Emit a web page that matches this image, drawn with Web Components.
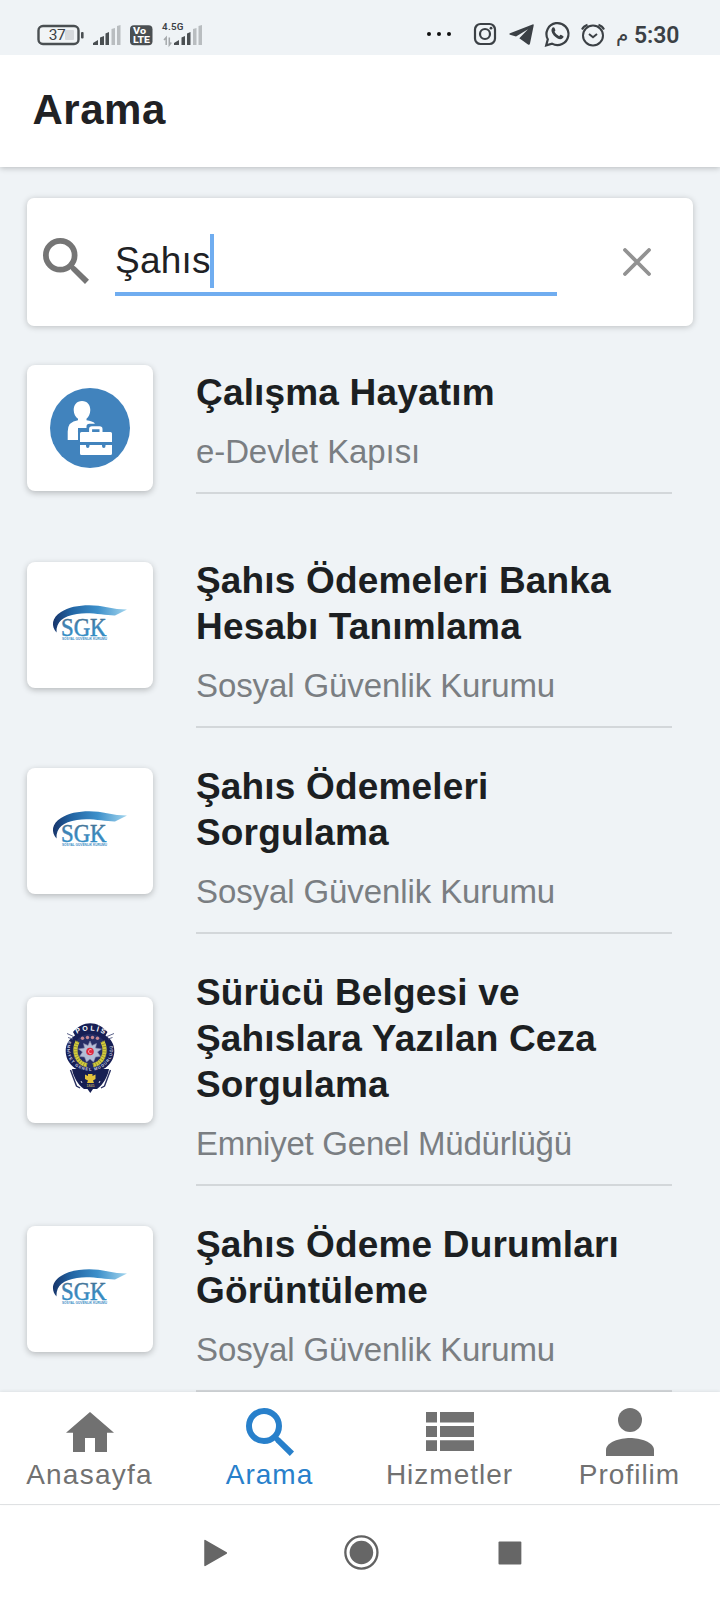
<!DOCTYPE html>
<html lang="tr">
<head>
<meta charset="utf-8">
<title>Arama</title>
<style>
html,body{margin:0;padding:0;background:#eff3f6}
body{width:720px;height:1600px;overflow:hidden;font-family:"Liberation Sans",Arial,sans-serif}
</style>
</head>
<body>
<phone-screen></phone-screen>
<script>
const define = (name, html, setup) => customElements.define(name, class extends HTMLElement {
  connectedCallback() {
    if (this.shadowRoot) return;
    const t = document.createElement('template');
    t.innerHTML = html;
    this.attachShadow({mode: 'open'}).append(t.content.cloneNode(true));
    if (setup) setup(this, this.shadowRoot);
  }
});

const ICONS = {
  search: '<svg viewBox="0 0 48 48"><circle cx="18" cy="18" r="15" fill="none" stroke="currentColor" stroke-width="6"/><path d="M27 30L30 27L34.200 30.300L48 43.600L43.800 48L30 34.200Z" fill="currentColor"/></svg>',
  home: '<svg viewBox="0 0 48 48"><path d="M24 4L48 24.8H41V44H29V30H19V44H7V24.8H0Z" fill="currentColor"/></svg>',
  list: '<svg viewBox="0 0 48 48"><path d="M0 4H11V14.6H0ZM14 4H48V14.6H14ZM0 18H11V29H0ZM14 18H48V29H14ZM0 32.2H11V43H0ZM14 32.2H48V43H14Z" fill="currentColor"/></svg>',
  person: '<svg viewBox="0 0 48 48"><circle cx="24" cy="12" r="12" fill="currentColor"/><path d="M0 48V42C0 34 14 30 24 30S48 34 48 42V48Z" fill="currentColor"/></svg>',
  close: '<svg viewBox="0 0 28 28"><path d="M2 2L26 26M26 2L2 26" stroke="currentColor" stroke-width="3.8" stroke-linecap="round"/></svg>'
};

const LOGOS = {
  work: `<svg viewBox="0 0 126 126"><circle cx="63" cy="63" r="40" fill="#4183bd"/>
    <path d="M55 36C60.500 36 63.300 40 63.300 45C63.300 49 61.500 52 59.500 53.700V55.300Q65.500 56 68 58.500L60 63H51V75H40.700V66.500Q40.700 56.500 51 55.300V53.700C48.500 52 46.700 49 46.700 45C46.700 40 49.500 36 55 36Z" fill="#fff"/>
    <path d="M50.700 76V66.500Q50.700 64.800 52.500 64.800H59.500V61.500Q59.500 58.800 62.500 58.800H74.500Q77.700 58.800 77.700 61.500V66H50.700Z" fill="#4183bd"/>
    <path d="M63.600 68V64Q63.600 62.700 65 62.700H72.600Q74 62.700 74 64V68" fill="none" stroke="#fff" stroke-width="3"/>
    <path d="M54.500 67H83.500Q85 67 85 68.500V77H53V68.500Q53 67 54.500 67ZM53 80H59V81Q59 83 60.700 83T62.500 81V80H75V81Q75 83 76.800 83T78.500 81V80H85V88.500Q85 90 83.500 90H54.500Q53 90 53 88.500Z" fill="#fff"/></svg>`,
  sgk: `<svg viewBox="0 0 126 126"><defs><linearGradient id="g" x1="0" x2="1"><stop offset="0" stop-color="#17356b"/><stop offset=".25" stop-color="#2265a4"/><stop offset=".6" stop-color="#3c8fca"/><stop offset="1" stop-color="#a2d5ee"/></linearGradient>
    <linearGradient id="t" x1="0" y1="0" x2="0" y2="1"><stop offset="0" stop-color="#47677f"/><stop offset=".5" stop-color="#3d86b9"/><stop offset="1" stop-color="#2c8fc9"/></linearGradient></defs>
    <path d="M29.500 70.500C24 64 24.500 56 34 50C45 42.300 66 41.700 80 45.200Q90 47.600 100 47.600L88 53.500C78 53.700 64 49.900 50 52C36 54 29 60 29.500 70.500Z" fill="url(#g)"/>
    <text x="34" y="73.500" font-family="Liberation Serif,serif" font-size="24.500" textLength="45.500" lengthAdjust="spacingAndGlyphs" fill="url(#t)" stroke="url(#t)" stroke-width=".5">SGK</text>
    <text x="35" y="78" font-family="Liberation Sans,sans-serif" font-weight="bold" font-size="3.300" textLength="45" lengthAdjust="spacingAndGlyphs" fill="#3c8cc4">SOSYAL GÜVENLİK KURUMU</text></svg>`,
  police: `<svg viewBox="0 0 126 126"><path d="M45 72L82 72C81 79 76 88 70 92H66L63.300 96L60.500 92H57C51 88 46 79 45 72Z" fill="#171f52"/>
    <path d="M43.500 73L49.500 89L53 91M83.500 73L77.500 89L74 91" fill="none" stroke="#282f61" stroke-width="1.400"/>
    <path d="M46 35C51 29.500 57 26.300 63.300 26.300S75.500 29.500 80.500 35L78.500 38.500C84 42 87.300 47 87.300 54C87.300 66 77 75.500 63 75.500S38.700 66 38.700 54C38.700 47 42 42 48 38.500Z" fill="#171f55"/>
    <path d="M40 36.500L46.500 39.500M87 36.500L80 39.500M41 40.500L46 42M85.500 40.500L81 42" stroke="#5b6289" stroke-width="1"/>
    <circle cx="63" cy="54.500" r="17.500" fill="#262e66"/>
    <path d="M50.500 44.500C45.500 55 50 66 60 68.300M75.500 44.500C80.500 55 76 66 66 68.300" fill="none" stroke="#d3cb3c" stroke-width="4.200"/>
    <path d="M50.500 44.500C45.500 55 50 66 60 68.300M75.500 44.500C80.500 55 76 66 66 68.300" fill="none" stroke="#807f35" stroke-width="4.200" stroke-dasharray=".6 2"/>
    <path d="M63 44L65 48.500L69.500 46.500L68.500 51L74.500 52L70.500 55L73.500 59.500L68.500 60L66.500 65L63 62L59.500 65L57.500 60L52.500 59.500L55.500 55L51.500 52L57.500 51L56.500 46.500L61 48.500Z" fill="#b3bed6" stroke="#8a86ad" stroke-width=".6"/>
    <circle cx="63" cy="54.500" r="3.800" fill="#e0293f"/><path d="M64.500 52.800A2 2 0 1 0 64.500 56.300" fill="none" stroke="#fbdde0" stroke-width=".8"/>
    <g fill="#c68792"><circle cx="55.500" cy="41.300" r="1.700"/><circle cx="60.500" cy="40.500" r="1.700"/><circle cx="65.500" cy="40.500" r="1.700"/><circle cx="70.500" cy="41.300" r="1.700"/></g>
    <defs><path id="a" d="M47 38.500Q63.300 28 81 39.500"/><path id="b" d="M41.500 44C35.500 60 48 73.800 63 73.800S90.500 60 84.500 44"/></defs>
    <text font-family="Liberation Sans,sans-serif" font-weight="bold" font-size="7" fill="#fff"><textPath href="#a" startOffset="3" textLength="29">POLİS</textPath></text>
    <text font-family="Liberation Sans,sans-serif" font-weight="bold" font-size="4" fill="#d5d8e8"><textPath href="#b" textLength="82">EMNİYET GENEL MÜDÜRLÜĞÜ</textPath></text>
    <path d="M58 77.500L61 79V77H65.500V79L68.500 77.500V82L66 83.500L67 86H60L61 83.500L58 82Z" fill="#e4c33c"/><text x="59.500" y="90" font-family="Liberation Sans,sans-serif" font-size="3.600" fill="#e4d36c">1845</text>
    <path d="M54 84L55 86M73 84L72 86" stroke="#d7d8e6"/></svg>`
};

define('ui-icon', `<style>:host{display:block;width:48px;height:48px}svg{display:block;width:100%;height:100%}</style>`,
  (el, root) => root.firstElementChild.insertAdjacentHTML('afterend', ICONS[el.getAttribute('name')]));

define('status-bar', `<style>
  :host{display:flex;box-sizing:border-box;height:55px;padding:20px 43px 0 37px;justify-content:space-between;background:#eff3f6;color:#3b4045;font-family:Roboto,sans-serif;position:relative;z-index:1}
  div{display:flex;height:27px}svg{display:block;height:27px;overflow:visible}
  .time{font-size:23px;line-height:31px;font-weight:600;letter-spacing:-.1px;margin-left:8px;width:43px;white-space:nowrap}
  .am{font:20px/29px "DejaVu Sans",sans-serif;margin-left:11px;width:10px}
  </style>
  <div>
    <svg width="47" viewBox="0 0 47 27"><rect x="1.500" y="6" width="40" height="18" rx="4.500" fill="#f1f4f6" stroke="#4a4f52" stroke-width="2.400"/><rect x="28" y="10" width="9" height="10" rx="1" fill="#d6d9dc"/><rect x="44" y="12" width="2.600" height="6.500" rx="1" fill="#4a4f52"/><text x="11.800" y="20.300" font-size="15.500" textLength="17" fill="#3b4045">37</text></svg>
    <svg width="28" style="margin-left:9px" viewBox="0 0 28 27"><path d="M0 25V23L5 20V25ZM7 25V17.500L11 16V25ZM12.500 25V13.500L16 12V25Z" fill="#4a4f52"/><path d="M18.500 25V9L22 8V25ZM24 25V6L27.500 5V25Z" fill="#b9bdc0"/></svg>
    <svg width="23" style="margin-left:9px" viewBox="0 0 23 27"><rect y="5.300" width="22.500" height="20" rx="4" fill="#4a4f52"/><g fill="#fff" font-size="9.500" font-weight="800"><text x="3" y="14" textLength="13" lengthAdjust="spacingAndGlyphs">Vo</text><text x="3" y="23.300" textLength="17" lengthAdjust="spacingAndGlyphs">LTE</text></g></svg>
    <svg width="42" style="margin-left:9px" viewBox="0 0 42 27"><text x="0" y="10" font-size="9.800" font-weight="600" fill="#3b4045" textLength="21.500">4.5G</text><path d="M4.200 25V17.500L2 20M7.300 17.500V25L9.300 22.500" fill="none" stroke="#a4a8ab" stroke-width="1.500"/><path d="M12 25V23L17 20V25ZM19.500 25V17.500L23 16V25ZM25 25V13.500L28.500 12V25Z" fill="#4a4f52"/><path d="M31 25V9L34.500 8V25ZM36.500 25V6L40 5V25Z" fill="#b9bdc0"/></svg>
  </div>
  <div>
    <svg width="25" viewBox="0 0 25 27"><g fill="#111"><circle cx="2" cy="14" r="2"/><circle cx="12" cy="14" r="2"/><circle cx="22" cy="14" r="2"/></g></svg>
    <svg width="22" style="margin-left:22px" viewBox="0 0 22 27"><g fill="none" stroke="#3b4045" stroke-width="2.200"><rect x="1" y="4" width="20" height="20" rx="5.500"/><circle cx="11" cy="14" r="5"/></g><circle cx="17" cy="8.200" r="1.400" fill="#3b4045"/></svg>
    <svg width="25" style="margin-left:12.500px" viewBox="0 0 25 27"><path d="M1 13.200L23.500 4.400Q25 4 24.700 5.500L21 23.500Q20.600 25.500 19 24.500L10.300 18.300L19 9.200L7 16.600L1 14.800Q-.7 14 1 13.200Z" fill="#3b4045"/></svg>
    <svg width="25" style="margin-left:11.500px" viewBox="0 0 25 27"><path d="M1.200 25.300L2.800 19.300A11 11 0 1 1 7 23.600Z" fill="none" stroke="#3b4045" stroke-width="2.200"/><path d="M7.500 7.500Q9.500 6.500 10 9Q11 10.500 9.500 11.800Q11 15 14.200 16.200Q15.500 14.300 16.300 14.900L18.500 16.200Q19 18 16.500 19Q13 19.800 8.800 15.500Q4.800 10.500 7.500 7.500Z" fill="#3b4045"/></svg>
    <svg width="24" style="margin-left:11px" viewBox="0 0 24 27"><g fill="none" stroke="#3b4045" stroke-width="2"><circle cx="12" cy="15.500" r="10"/><path d="M1 9.500Q2.500 6 6.500 4.700M23 9.500Q21.500 6 17.500 4.700M8 14L12 17.200L16 14"/></g></svg>
    <span class="am">م</span><span class="time">5:30</span>
  </div>`);

define('app-header', `<style>:host{display:flex;align-items:center;box-sizing:border-box;height:112px;padding:0 32.500px 2px;background:#fff;box-shadow:0 1px 6px rgba(0,0,0,.24);color:#202124}
  h1{margin:0;font-size:42px;font-weight:700;letter-spacing:.5px}</style><h1><slot></slot></h1>`);

define('search-box', `<style>
  :host{display:flex;box-sizing:border-box;width:666px;height:128px;margin:31px 0 8px 27px;padding:36px 42px 30px 16px;background:#fff;border-radius:7px;box-shadow:0 1px 6px rgba(0,0,0,.22);color:#202124}
  .s{width:46px;height:46px;margin-top:4px;color:#757575}
  .f{display:flex;box-sizing:border-box;margin-left:26px;width:442px;height:62px;border-bottom:4px solid #70adf0;font-size:37px;line-height:54px;letter-spacing:.2px;white-space:nowrap}
  i{width:4px;height:54px;background:#70adf0;margin-left:-.5px}
  .x{width:28px;height:28px;margin:14px 0 0 66px;color:#929292}
  </style><ui-icon class="s" name="search"></ui-icon><div class="f"><span><slot></slot></span><i></i></div><ui-icon class="x" name="close"></ui-icon>`);

define('service-item', `<style>
  :host{display:flex;box-sizing:border-box;min-height:188px;padding-left:27px}
  .tile{align-self:center;flex:none;width:126px;height:126px;background:#fff;border-radius:8px;box-shadow:0 2px 6px rgba(0,0,0,.24)}
  svg{display:block;width:126px;height:126px}
  .body{align-self:flex-start;box-sizing:border-box;width:476px;margin-left:43px;padding:36px 0 20px;border-bottom:2px solid #d3d7da}
  .t{font-size:37px;line-height:46px;font-weight:700;letter-spacing:.17px;color:#1c1f22;white-space:nowrap}
  .p{margin-top:16px;font-size:33px;line-height:40px;letter-spacing:var(--org-tracking,-.1px);color:#7a7e82}
  ::slotted(span){display:block}
  </style><div class="tile"></div><div class="body"><div class="t"><slot></slot></div><div class="p"><slot name="org"></slot></div></div>`,
  (el, root) => root.querySelector('.tile').innerHTML = LOGOS[el.getAttribute('logo')]);

define('nav-item', `<style>:host{display:flex;flex-direction:column;align-items:center;flex:1;padding-top:15px;color:#717171}
  :host([active]){color:#2880cb}span{font-size:28px;line-height:32px;letter-spacing:1px;margin:3px 1px 0 0}:host([icon=home]) span{letter-spacing:1.250px}</style>
  <ui-icon></ui-icon><span><slot></slot></span>`,
  (el, root) => { const i = document.createElement('ui-icon'); i.setAttribute('name', el.getAttribute('icon')); root.querySelector('ui-icon').replaceWith(i); });

define('bottom-nav', `<style>:host{display:flex;box-sizing:border-box;height:113px;border-top:1px solid #fff;border-bottom:1px solid #dfe1e3;background:#fff;box-shadow:0 -1px 3px rgba(0,0,0,.07);position:relative}</style><slot></slot>`);

define('system-bar', `<style>:host{display:flex;box-sizing:border-box;height:95px;padding:0 198px 0 202.500px;align-items:center;background:#fff}svg{display:block}</style>
  <svg width="25" height="28" viewBox="0 0 25 28"><path d="M2 1.500L23.500 14L2 26.500Z" fill="#666" stroke="#666" stroke-width="1.500" stroke-linejoin="round"/></svg>
  <svg width="35" height="35" style="margin-left:116.500px" viewBox="0 0 36 36"><circle cx="18" cy="18" r="16.600" fill="none" stroke="#626262" stroke-width="2.400"/><circle cx="18" cy="18" r="12.200" fill="#666"/></svg>
  <svg width="24" height="24" style="margin-left:119.500px" viewBox="0 0 24 24"><rect x=".5" y=".5" width="23" height="23" rx="1" fill="#666"/></svg>`);

define('phone-screen', `<style>
  :host{display:flex;flex-direction:column;width:720px;height:1600px;background:#eff3f6;overflow:hidden}
  status-bar,app-header,bottom-nav,system-bar{flex:none}
  main{flex:1;min-height:0;overflow:hidden}
  [logo=police]{--org-tracking:-.25px}
  </style>
  <status-bar></status-bar><app-header>Arama</app-header>
  <main><search-box>Şahıs</search-box>
  <service-item logo="work">Çalışma Hayatım<span slot="org">e-Devlet Kapısı</span></service-item>
  <service-item logo="sgk">Şahıs Ödemeleri Banka<br>Hesabı Tanımlama<span slot="org">Sosyal Güvenlik Kurumu</span></service-item>
  <service-item logo="sgk">Şahıs Ödemeleri<br>Sorgulama<span slot="org">Sosyal Güvenlik Kurumu</span></service-item>
  <service-item logo="police">Sürücü Belgesi ve<br>Şahıslara Yazılan Ceza<br>Sorgulama<span slot="org">Emniyet Genel Müdürlüğü</span></service-item>
  <service-item logo="sgk">Şahıs Ödeme Durumları<br>Görüntüleme<span slot="org">Sosyal Güvenlik Kurumu</span></service-item>
  </main>
  <bottom-nav><nav-item icon="home">Anasayfa</nav-item><nav-item icon="search" active>Arama</nav-item><nav-item icon="list">Hizmetler</nav-item><nav-item icon="person">Profilim</nav-item></bottom-nav>
  <system-bar></system-bar>`);
</script>
</body>
</html>
